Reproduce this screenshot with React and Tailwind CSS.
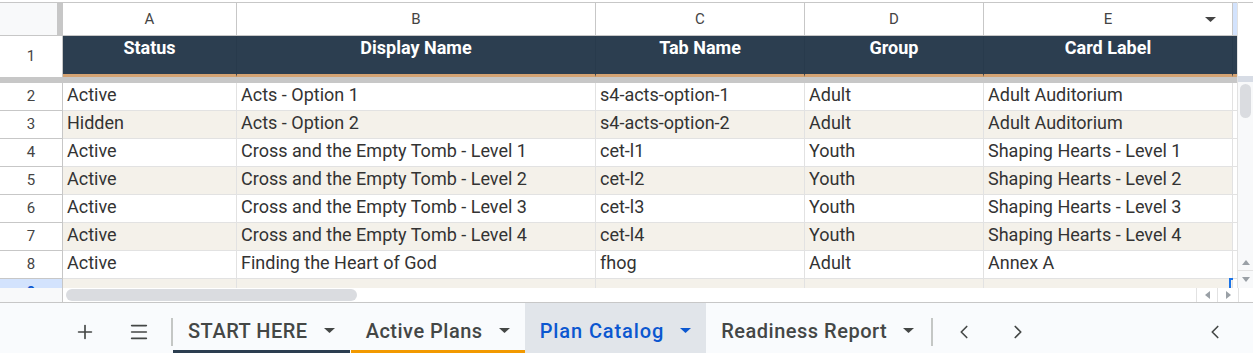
import { Plus, Menu, ChevronLeft, ChevronRight } from 'lucide-react';

const rows = [
  ['Active', 'Acts - Option 1', 's4-acts-option-1', 'Adult', 'Adult Auditorium'],
  ['Hidden', 'Acts - Option 2', 's4-acts-option-2', 'Adult', 'Adult Auditorium'],
  ['Active', 'Cross and the Empty Tomb - Level 1', 'cet-l1', 'Youth', 'Shaping Hearts - Level 1'],
  ['Active', 'Cross and the Empty Tomb - Level 2', 'cet-l2', 'Youth', 'Shaping Hearts - Level 2'],
  ['Active', 'Cross and the Empty Tomb - Level 3', 'cet-l3', 'Youth', 'Shaping Hearts - Level 3'],
  ['Active', 'Cross and the Empty Tomb - Level 4', 'cet-l4', 'Youth', 'Shaping Hearts - Level 4'],
  ['Active', 'Finding the Heart of God', 'fhog', 'Adult', 'Annex A'],
  ['', '', '', '', ''],
];

const letters = ['A', 'B', 'C', 'D', 'E'];
const headers = ['Status', 'Display Name', 'Tab Name', 'Group', 'Card Label'];

function Caret({ className = 'fill-[#444746]' }) {
  return (
    <svg width="11" height="5" viewBox="0 0 11 5" className={className}>
      <path d="M0 0h11L5.5 5z" />
    </svg>
  );
}

function Tab({ label, active, bar }) {
  return (
    <div
      className={`h-full flex items-center gap-[16px] px-[15px] pt-[8px] border-b-[3px] ${bar} ${
        active ? 'bg-[#e1e5ea] text-[#0b57d0]' : 'text-[#444746]'
      }`}
    >
      <span className={`text-[20px] leading-none font-medium ${active ? 'tracking-[0.9px]' : 'tracking-[0.5px]'}`}>
        {label}
      </span>
      <Caret className={active ? 'fill-[#0b57d0]' : 'fill-[#444746]'} />
    </div>
  );
}

export default function App() {
  return (
    <div
      className="w-[1253px] h-[353px] bg-white flex flex-col overflow-hidden text-[#333]"
      style={{ fontFamily: 'Roboto, "Liberation Sans", sans-serif' }}
    >
      {/* sheet area */}
      <div className="h-[288px] flex pt-[2px] overflow-hidden">
        <div className="w-[1237px] flex flex-col border-t border-[#c7c7c7]">
          {/* column letters */}
          <div className="grid grid-cols-[63px_174px_359px_209px_179px_249px_4px] h-[33px] shrink-0">
            <div className="bg-[#f8f9fa] border-r-[6px] border-r-[#c7c7c7] border-b border-b-[#c7c7c7]" />
            {letters.map((l, i) => (
              <div
                key={l}
                className="relative flex items-center justify-center border-r border-b border-[#c7c7c7] text-[15px] text-[#444]"
              >
                {l}
                {i === 4 && (
                  <div className="absolute right-[16px] top-[14px]">
                    <Caret className="fill-[#444]" />
                  </div>
                )}
              </div>
            ))}
            <div className="bg-[#d3e3fd] border-b border-[#c7c7c7]" />
          </div>

          {/* header row 1 */}
          <div className="grid grid-cols-[63px_174px_359px_209px_179px_249px_4px] h-[41px] shrink-0">
            <div className="flex items-center justify-center text-[15px] text-[#444] border-r border-[#c7c7c7]">
              1
            </div>
            {headers.map((h) => (
              <div
                key={h}
                className="bg-[#2c3e50] border-r border-r-[#283a4c] border-b-[3px] border-b-[#d4a373] text-white font-bold text-[18px] text-center pt-[1px] leading-[22px]"
              >
                {h}
              </div>
            ))}
            <div className="bg-[#2c3e50] border-b-[3px] border-b-[#d4a373]" />
          </div>
          <div className="h-[6px] bg-[#c7c7c7] shrink-0" />

          {/* data rows */}
          {rows.map((r, i) => (
            <div
              key={i}
              className={`grid grid-cols-[63px_174px_359px_209px_179px_249px_4px] h-[28px] shrink-0 ${
                i % 2 === 1 ? 'bg-[#f4f1ea]' : 'bg-white'
              }`}
            >
              <div
                className={`flex items-center justify-center text-[15px] border-r border-b border-[#c7c7c7] ${
                  i === 7 ? 'bg-[#d3e3fd] text-[#0b57d0] font-bold' : 'bg-white text-[#444]'
                }`}
              >
                {i + 2}
              </div>
              {r.map((c, j) => (
                <div
                  key={j}
                  className="flex items-center px-[4px] pb-[4px] border-r border-b border-[#e2e2e2] text-[18px] whitespace-nowrap overflow-hidden"
                >
                  {c}
                </div>
              ))}
              <div className="relative bg-white border-b border-[#e2e2e2]">
                {i === 7 && <div className="absolute left-[-4px] top-[-1px] w-[4px] h-[10px] border-t-2 border-l-2 border-[#1a73e8]" />}
              </div>
            </div>
          ))}
        </div>

        {/* vertical scrollbar */}
        <div className="flex-1 flex flex-col border-l border-[#e2e2e2] bg-[#f8f9fa]">
          <div className="h-[74px] bg-white border-t border-[#c7c7c7]" />
          <div className="h-[6px] bg-[#d7dce5]" />
          <div className="flex-1 pt-[2px] px-[2px]">
            <div className="h-[34px] rounded-full bg-[#dadce0]" />
          </div>
          <div className="h-[17px] flex items-center justify-center border-b border-[#e2e2e2]">
            <svg width="8" height="5" viewBox="0 0 8 5" className="fill-[#9aa0a6]">
              <path d="M0 5h8L4 0z" />
            </svg>
          </div>
          <div className="h-[17px] flex items-center justify-center">
            <svg width="8" height="5" viewBox="0 0 8 5" className="fill-[#9aa0a6]">
              <path d="M0 0h8L4 5z" />
            </svg>
          </div>
        </div>
      </div>

      {/* horizontal scrollbar */}
      <div className="h-[15px] flex border-b border-[#c7c7c7] shrink-0">
        <div className="w-[63px] bg-[#f8f9fa] border-r border-[#c7c7c7]" />
        <div className="flex-1 pl-[3px] pt-[1px]">
          <div className="w-[291px] h-[12px] rounded-full bg-[#dadce0]" />
        </div>
        <div className="w-[21px] flex items-center justify-center border-l border-[#e2e2e2]">
          <svg width="5" height="8" viewBox="0 0 5 8" className="fill-[#9aa0a6]">
            <path d="M5 0v8L0 4z" />
          </svg>
        </div>
        <div className="w-[21px] flex items-center justify-center border-l border-[#e2e2e2]">
          <svg width="5" height="8" viewBox="0 0 5 8" className="fill-[#9aa0a6]">
            <path d="M0 0v8l5-4z" />
          </svg>
        </div>
        <div className="w-[15px] border-l border-[#e2e2e2]" />
      </div>

      {/* sheet tabs */}
      <div className="flex-1 flex items-stretch bg-[#f9fbfd]">
        <div className="w-[64px]" />
        <div className="w-[42px] pt-[8px] flex items-center justify-center text-[#444746]">
          <Plus size={22} strokeWidth={1.8} />
        </div>
        <div className="w-[12px]" />
        <div className="w-[42px] pt-[8px] flex items-center justify-center text-[#444746]">
          <Menu size={22} strokeWidth={1.8} />
        </div>
        <div className="w-[11px]" />
        <div className="flex items-center pt-[8px]">
          <div className="w-[2px] h-[28px] bg-[#c4c7c5]" />
        </div>
        <Tab label="START HERE" bar="border-b-[#2c3e50]" />
        <div className="w-[1px]" />
        <Tab label="Active Plans" bar="border-b-[#f29900]" />
        <Tab label="Plan Catalog" active bar="border-b-transparent" />
        <Tab label="Readiness Report" bar="border-b-transparent" />
        <div className="flex items-center pl-[2px] pt-[8px]">
          <div className="w-[2px] h-[28px] bg-[#c4c7c5]" />
        </div>
        <div className="w-[42px] pt-[8px] flex items-center justify-end text-[#444746]">
          <ChevronLeft size={22} strokeWidth={1.8} />
        </div>
        <div className="w-[54px] pt-[8px] flex items-center justify-end text-[#444746]">
          <ChevronRight size={22} strokeWidth={1.8} />
        </div>
        <div className="flex-1 pt-[8px] flex items-center justify-end pr-[27px] text-[#444746]">
          <ChevronLeft size={22} strokeWidth={1.8} />
        </div>
      </div>
    </div>
  );
}
